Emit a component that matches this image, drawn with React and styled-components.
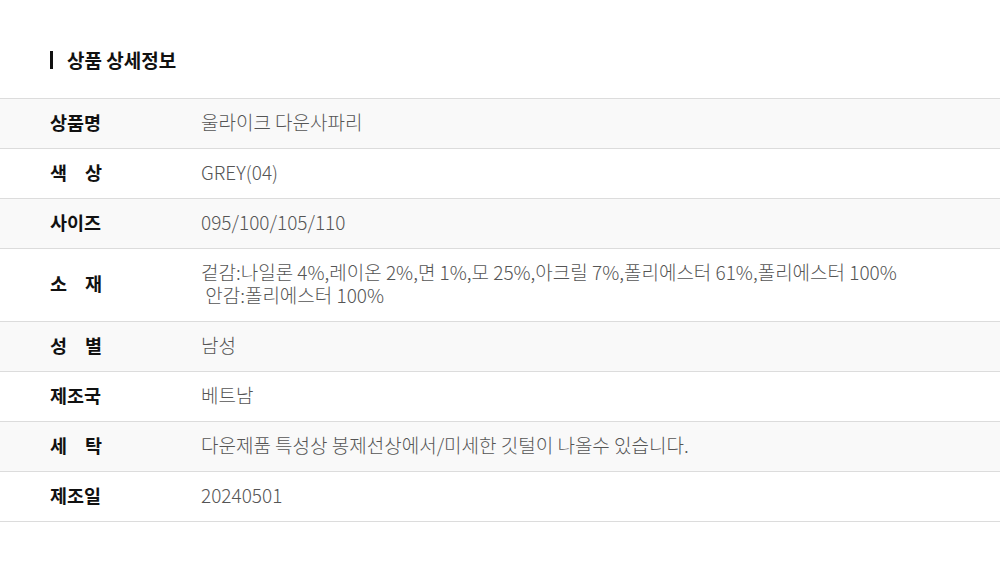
import styled, { createGlobalStyle } from 'styled-components'

const GlobalStyle = createGlobalStyle`
    body {
        margin: 0;
        background: #fff;
        font-family: "Noto Sans CJK KR", "Noto Sans", sans-serif;
    }
`

const Section = styled.section`
    padding-top: 46px;
    width: 1000px;
`

const Title = styled.h2`
    align-items: center;
    color: #111;
    display: flex;
    font-size: 19px;
    font-weight: 700;
    height: 26px;
    margin: 0 0 26px 50px;

    &::before {
        background: #111;
        content: '';
        display: block;
        height: 18px;
        margin-right: 14px;
        margin-top: 2px;
        width: 3px;
    }
`

const Table = styled.div`
    border-top: 1px solid #dcdcdc;
`

const Row = styled.div`
    align-items: center;
    background: ${(p) => (p.$shade ? '#f9f9f9' : '#fff')};
    border-bottom: 1px solid #dcdcdc;
    box-sizing: border-box;
    display: flex;
    height: ${(p) => (p.$tall ? '73px' : '50px')};
    padding-bottom: 4px;
`

const Label = styled.div`
    color: #111;
    display: flex;
    font-size: 18.5px;
    font-weight: 700;
    justify-content: ${(p) => (p.$spread ? 'space-between' : 'flex-start')};
    margin-left: 50px;
    margin-right: 99px;
    width: 52px;
`

const Value = styled.div`
    color: #555;
    font-size: 19px;
    font-weight: 300;
    line-height: 23px;
    white-space: pre-wrap;
`

const rows = [
    { label: '상품명', value: '울라이크 다운사파리' },
    { label: '색 상', value: 'GREY(04)' },
    { label: '사이즈', value: '095/100/105/110' },
    {
        label: '소 재',
        value: '겉감:나일론 4%,레이온 2%,면 1%,모 25%,아크릴 7%,폴리에스터 61%,폴리에스터 100%\n 안감:폴리에스터 100%',
        tall: true,
    },
    { label: '성 별', value: '남성' },
    { label: '제조국', value: '베트남' },
    { label: '세 탁', value: '다운제품 특성상 봉제선상에서/미세한 깃털이 나올수 있습니다.' },
    { label: '제조일', value: '20240501' },
]

export default function App() {
    return (
        <>
            <GlobalStyle />
            <Section>
                <Title>상품 상세정보</Title>
                <Table>
                    {rows.map((r, i) => {
                        const parts = r.label.split(' ')
                        return (
                            <Row key={r.label} $shade={i % 2 === 0} $tall={r.tall}>
                                <Label $spread={parts.length > 1}>
                                    {parts.map((p) => (
                                        <span key={p}>{p}</span>
                                    ))}
                                </Label>
                                <Value>{r.value}</Value>
                            </Row>
                        )
                    })}
                </Table>
            </Section>
        </>
    )
}
